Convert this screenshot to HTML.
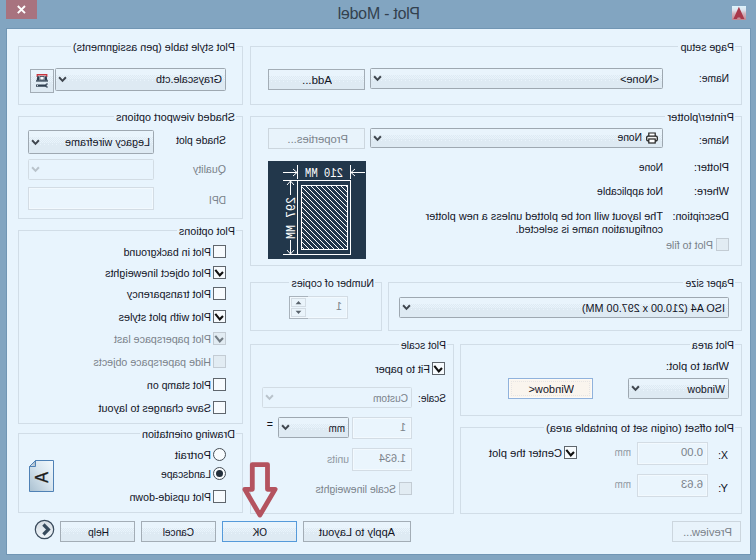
<!DOCTYPE html>
<html lang="en"><head><meta charset="utf-8"><title>Plot - Model</title>
<style>
html,body{margin:0;padding:0;background:#82a5c1;}
body{width:756px;height:560px;overflow:hidden;position:relative;font-family:"Liberation Sans",sans-serif;}
#dlg{position:absolute;left:0;top:0;width:756px;height:560px;transform:scaleX(-1);transform-origin:50% 50%;background:#82a5c1;overflow:hidden;}
#client{position:absolute;right:7px;top:29px;width:743px;height:525px;background:#e8f4fd;box-shadow:0 0 0 1px #7196b4;}
#dlg div,#dlg span,#dlg svg.abs{position:absolute;box-sizing:border-box;}
.t{color:#11131f;white-space:nowrap;font-size:11.5px;line-height:14px;transform-origin:0 0;}
.g{color:#7a828a;}
.g2{color:#8f979f;}
.grp{border:1px solid #d1dde7;}
.mask{background:#e8f4fd;}
.cb{border-radius:1.5px;border:1px solid #9ea8b1;background:linear-gradient(#e9f4fc,#e9f4fc) 0 0/100% 6px no-repeat,repeating-conic-gradient(#e9f4fc 0 25%,#deeaf3 0 50%) 0 6px/2px 2px repeat-x,repeating-conic-gradient(#e9f4fc 0 25%,#deeaf3 0 50%) 0 8px/2px 2px repeat-x,linear-gradient(90deg,#e9f4fc 1px,rgba(233,244,252,0) 1px) 0 11px/4px 1px repeat-x,#deeaf3;}
.cb.dis{border-color:#d2dce4;background:#e8f4fd;}
.cb .arw{position:absolute;right:2px;top:50%;margin-top:-3.500px;}
.cb .prn{position:absolute;left:4px;top:3px;}
.btn{border:1px solid #a3adb6;background:linear-gradient(#e9f4fc,#e9f4fc) 0 0/100% 6px no-repeat,repeating-conic-gradient(#e9f4fc 0 25%,#deeaf3 0 50%) 0 6px/2px 2px repeat-x,repeating-conic-gradient(#e9f4fc 0 25%,#deeaf3 0 50%) 0 8px/2px 2px repeat-x,linear-gradient(90deg,#e9f4fc 1px,rgba(233,244,252,0) 1px) 0 11px/4px 1px repeat-x,#deeaf3;}
.tall{background:linear-gradient(#e9f4fc,#e9f4fc) 0 0/100% 6px no-repeat,repeating-conic-gradient(#e9f4fc 0 25%,#deeaf3 0 50%) 0 6px/2px 2px repeat-x,repeating-conic-gradient(#e9f4fc 0 25%,#deeaf3 0 50%) 0 8px/2px 2px repeat-x,repeating-conic-gradient(#e9f4fc 0 25%,#deeaf3 0 50%) 0 10px/2px 2px repeat-x,linear-gradient(90deg,#e9f4fc 1px,rgba(233,244,252,0) 1px) 0 13px/4px 1px repeat-x,#deeaf3;}
.btn.dis{border-color:#ccd6de;background:#e8f3fb;}
.btn.def{border-color:#559ada;}
.btn.hot{border-color:#90b2dc;background:#faf5ee;box-shadow:inset 0 0 0 1px #fdfaf6;}
.btn.hot:after{content:"";position:absolute;left:2px;top:2px;right:2px;bottom:2px;border:1px dotted rgba(110,125,165,0.13);}
.tb{border:1px solid #d3dce4;background:#eaf5fd;box-shadow:inset 0 0 0 1px #f2f9fe;}
.ck{border:1px solid #5f666d;background:#f7fbfe;}
.ck.dis{border-color:#c3ccd4;background:#e2ecf3;}
.ck svg{position:absolute;left:0;top:0;}
.rd{border:1px solid #454d55;border-radius:50%;background:#f9fcfe;}
.rd i{position:absolute;left:2px;top:2px;width:7px;height:7px;border-radius:50%;background:#232f3b;}
.spn{border:1px solid #a9b3bc;border-left:0;}
.spb{border:1px solid #d3dce4;background:#eaf4fb;}
.spb svg{position:absolute;left:0;top:0;}
#title{left:-1px;width:756px;top:4px;text-align:center;font-size:16px;line-height:19px;color:#33414e;letter-spacing:-0.27px;}
#close{right:6px;top:0;width:31px;height:19px;background:#a8737f;}
</style></head>
<body>
<div id="dlg">
<div id="title"><span id="ttl" style="position:static">Plot - Model</span></div>
<div id="close"><svg width="32" height="20" viewBox="0 0 32 20" style="position:absolute;left:0;top:0"><path d="M12 6 L19.200 13.200 M19.200 6 L12 13.200" stroke="#fff" stroke-width="1.9" fill="none"/></svg></div>
<svg class="abs" style="right:732px;top:6px" width="14" height="14" viewBox="0 0 14 14"><defs><linearGradient id="ig" x1="0" y1="0" x2="0" y2="1"><stop offset="0" stop-color="#dcf3fc"/><stop offset="0.3" stop-color="#dde4ee"/><stop offset="0.55" stop-color="#d3b3bc"/><stop offset="1" stop-color="#bf8590"/></linearGradient></defs><rect width="14" height="14" fill="url(#ig)"/><path d="M7.100 0.800 L12.600 13 H9 L8.300 11.400 H5.900 L5.200 13 H1.600 Z" fill="#a8384a"/></svg>
<div id="client"></div>
<div class="grp" style="right:18px;top:46px;width:225px;height:59px;"></div>
<div class="mask" style="right:70.6px;top:44px;width:165.5px;height:6px"></div>
<span id="t1" class="t" style="left:521.4px;top:40.40px;transform:scaleX(0.939);">Plot style table (pen assignments)</span>
<div class="cb" style="right:55px;top:68px;width:171px;height:23px;"><svg class="arw" width="9" height="7" viewBox="0 0 9 7"><path d="M1.100 1.300 L4.500 4.900 L7.900 1.300" fill="none" stroke="#40474f" stroke-width="2"/></svg></div>
<span id="t2" class="t" style="left:533.6px;top:71.50px;transform:scaleX(0.939);">Grayscale.ctb</span>
<div class="btn ico tall" style="right:30px;top:69px;width:24px;height:24px;"><svg width="24" height="24" viewBox="0 0 24 24" style="position:absolute;left:-1px;top:-1px">
<path d="M6.600 8 V5 H17.400 V8 H16.200 V6.400 H7.800 V8 Z" fill="#c9353d"/>
<path d="M7.300 7.200 H9 L9.300 11.500 H6.600 Z M15 7.200 H16.700 L17.400 11.500 H14.700 Z" fill="#2f3f50"/>
<rect x="9.900" y="7.400" width="4.200" height="3.600" fill="#fbfdff" stroke="#2f3f50" stroke-width="0.8"/>
<rect x="6" y="11.300" width="12" height="1.300" fill="#2f3f50"/>
<path d="M18 15.500 V17.700 H8.600 L7.800 18.600 H6.100 V17.600 H7.300 V15.600 H6.100 V14.600 H7.800 L8.600 15.500 Z" fill="#2f3f50"/>
<circle cx="16.600" cy="16.600" r="0.600" fill="#eaf3fa"/>
</svg></div>
<div class="grp" style="right:18px;top:116px;width:225px;height:103px;"></div>
<div class="mask" style="right:113.6px;top:114px;width:122.5px;height:6px"></div>
<span id="t3" class="t" style="left:521.4px;top:110.40px;transform:scaleX(0.945);">Shaded viewport options</span>
<span id="t4" class="t" style="left:530px;top:132.70px;transform:scaleX(0.909);">Shade plot</span>
<div class="cb tall" style="right:28px;top:130px;width:126px;height:24px;"><svg class="arw" width="9" height="7" viewBox="0 0 9 7"><path d="M1.100 1.300 L4.500 4.900 L7.900 1.300" fill="none" stroke="#40474f" stroke-width="2"/></svg></div>
<span id="t5" class="t" style="left:606px;top:134.50px;transform:scaleX(0.936);">Legacy wireframe</span>
<span id="t6" class="t g" style="left:530px;top:161.90px;transform:scaleX(0.922);">Quality</span>
<div class="cb dis" style="right:28px;top:159px;width:126px;height:21px;"><svg class="arw" width="9" height="7" viewBox="0 0 9 7"><path d="M1.100 1.300 L4.500 4.900 L7.900 1.300" fill="none" stroke="#b9c3cb" stroke-width="2"/></svg></div>
<span id="t7" class="t g" style="left:530px;top:192.90px;transform:scaleX(0.887);">DPI</span>
<div class="tb" style="right:28px;top:187px;width:126px;height:23px;"></div>
<div class="grp" style="right:18px;top:230px;width:225px;height:194px;"></div>
<div class="mask" style="right:176.6px;top:228px;width:59.5px;height:6px"></div>
<span id="t8" class="t" style="left:521.4px;top:224.40px;transform:scaleX(0.932);">Plot options</span>
<div class="ck" style="right:213px;top:245px;width:13px;height:13px;"></div>
<span id="t9" class="t" style="left:545.3px;top:245.20px;transform:scaleX(0.918);">Plot in background</span>
<div class="ck" style="right:213px;top:266px;width:13px;height:13px;"><svg width="11" height="11" viewBox="0 0 11 11"><path d="M2 5 L5.200 8.300 L9.700 2.800" fill="none" stroke="#111" stroke-width="2.1" stroke-linejoin="miter"/></svg></div>
<span id="t10" class="t" style="left:545.3px;top:266.20px;transform:scaleX(0.931);">Plot object lineweights</span>
<div class="ck" style="right:213px;top:287px;width:13px;height:13px;"></div>
<span id="t11" class="t" style="left:545.3px;top:287.20px;transform:scaleX(0.939);">Plot transparency</span>
<div class="ck" style="right:213px;top:310px;width:13px;height:13px;"><svg width="11" height="11" viewBox="0 0 11 11"><path d="M2 5 L5.200 8.300 L9.700 2.800" fill="none" stroke="#111" stroke-width="2.1" stroke-linejoin="miter"/></svg></div>
<span id="t12" class="t" style="left:545.3px;top:310.20px;transform:scaleX(0.946);">Plot with plot styles</span>
<div class="ck dis" style="right:213px;top:332px;width:13px;height:13px;"><svg width="11" height="11" viewBox="0 0 11 11"><path d="M2 5 L5.200 8.300 L9.700 2.800" fill="none" stroke="#727c84" stroke-width="2.1" stroke-linejoin="miter"/></svg></div>
<span id="t13" class="t g" style="left:545.3px;top:332.20px;transform:scaleX(0.931);">Plot paperspace last</span>
<div class="ck dis" style="right:213px;top:355px;width:13px;height:13px;"></div>
<span id="t14" class="t g" style="left:545.3px;top:355.20px;transform:scaleX(0.928);">Hide paperspace objects</span>
<div class="ck" style="right:213px;top:378px;width:13px;height:13px;"></div>
<span id="t15" class="t" style="left:545.3px;top:378.20px;transform:scaleX(0.910);">Plot stamp on</span>
<div class="ck" style="right:213px;top:401px;width:13px;height:13px;"></div>
<span id="t16" class="t" style="left:545.3px;top:401.20px;transform:scaleX(0.941);">Save changes to layout</span>
<div class="grp" style="right:18px;top:433px;width:225px;height:80px;"></div>
<div class="mask" style="right:139.6px;top:431px;width:96.5px;height:6px"></div>
<span id="t17" class="t" style="left:521.4px;top:427.40px;transform:scaleX(0.939);">Drawing orientation</span>
<div class="rd" style="right:213px;top:448px;width:13px;height:13px;"></div>
<span id="t18" class="t" style="left:545.1px;top:448.20px;transform:scaleX(0.971);">Portrait</span>
<div class="rd" style="right:213px;top:467px;width:13px;height:13px;"><i></i></div>
<span id="t19" class="t" style="left:545.1px;top:467.40px;transform:scaleX(0.888);">Landscape</span>
<div class="ck" style="right:213px;top:490px;width:13px;height:13px;"></div>
<span id="t20" class="t" style="left:545.1px;top:490.20px;transform:scaleX(0.924);">Plot upside-down</span>
<div class="pico" style="right:29px;top:460px;width:25px;height:32px;"><svg width="25" height="32" viewBox="0 0 25 32">
<defs><linearGradient id="pg" x1="0" y1="0" x2="1" y2="1"><stop offset="0" stop-color="#f3f9fd"/><stop offset="0.45" stop-color="#d9e6ef"/><stop offset="1" stop-color="#a9c0d0"/></linearGradient>
<linearGradient id="pf" x1="0" y1="0" x2="1" y2="1"><stop offset="0" stop-color="#93a9bb"/><stop offset="1" stop-color="#dfe9f1"/></linearGradient></defs>
<path d="M0.5 0.5 H18.5 L24.5 6.5 V31.5 H0.5 Z" fill="url(#pg)" stroke="#4f81b5" stroke-width="1"/>
<path d="M18.5 0.5 V6.5 H24.5 Z" fill="url(#pf)" stroke="#4f81b5" stroke-width="1" stroke-linejoin="round"/>
<text x="0" y="0" transform="translate(5.9,17.4) rotate(90) scale(0.9,1)" text-anchor="middle" font-family="Liberation Sans, sans-serif" font-size="18" fill="#1c1c1c" stroke="#1c1c1c" stroke-width="0.3">A</text>
</svg></div>
<div class="grp" style="right:250px;top:46px;width:492px;height:59px;"></div>
<div class="mask" style="right:678.1px;top:44px;width:57.0px;height:6px"></div>
<span id="t21" class="t" style="left:22.4px;top:40.40px;transform:scaleX(0.919);">Page setup</span>
<span id="t22" class="t" style="left:27px;top:70.90px;transform:scaleX(0.886);">Name:</span>
<div class="cb" style="right:370px;top:68px;width:293px;height:21px;"><svg class="arw" width="9" height="7" viewBox="0 0 9 7"><path d="M1.100 1.300 L4.500 4.900 L7.900 1.300" fill="none" stroke="#40474f" stroke-width="2"/></svg></div>
<span id="t23" class="t" style="left:96.6px;top:71.50px;transform:scaleX(0.953);">&lt;None&gt;</span>
<div class="btn" style="right:268px;top:69px;width:97px;height:21px;"></div>
<span id="t24" class="t" style="left:423.6px;top:73.20px;transform:scaleX(0.998);">Add...</span>
<div class="grp" style="right:250px;top:116px;width:492px;height:150px;"></div>
<div class="mask" style="right:665.1px;top:114px;width:70.0px;height:6px"></div>
<span id="t25" class="t" style="left:22.4px;top:110.40px;transform:scaleX(0.963);">Printer/plotter</span>
<span id="t26" class="t" style="left:27px;top:133.40px;transform:scaleX(0.886);">Name:</span>
<div class="cb" style="right:370px;top:128px;width:293px;height:20px;"><svg class="arw" width="9" height="7" viewBox="0 0 9 7"><path d="M1.100 1.300 L4.500 4.900 L7.900 1.300" fill="none" stroke="#40474f" stroke-width="2"/></svg><svg class="prn" width="12" height="12" viewBox="0 0 12 12">
<path d="M2.800 4.500 V1 H9.200 V4.500" fill="#fff" stroke="#222" stroke-width="1.2"/>
<rect x="0.700" y="4.200" width="10.600" height="4.600" rx="1.2" fill="#f4f4f4" stroke="#222" stroke-width="1.3"/>
<rect x="2.800" y="7" width="6.400" height="4" fill="#fff" stroke="#222" stroke-width="1.2"/>
</svg></div>
<span id="t27" class="t" style="left:114.2px;top:130.40px;transform:scaleX(0.891);">None</span>
<div class="btn dis" style="right:268px;top:128px;width:97px;height:21px;"></div>
<span id="t28" class="t g" style="left:408.45px;top:132.20px;transform:scaleX(0.976);">Properties...</span>
<span id="t29" class="t" style="left:26.5px;top:160.40px;transform:scaleX(0.961);">Plotter:</span>
<span id="t30" class="t" style="left:93px;top:160.40px;transform:scaleX(0.873);">None</span>
<span id="t31" class="t" style="left:26.5px;top:184.40px;transform:scaleX(0.944);">Where:</span>
<span id="t32" class="t" style="left:93px;top:184.40px;transform:scaleX(0.905);">Not applicable</span>
<span id="t33" class="t" style="left:26.5px;top:209.10px;transform:scaleX(0.931);">Description:</span>
<span id="t34" class="t" style="left:93px;top:209.10px;transform:scaleX(0.945);">The layout will not be plotted unless a new plotter</span>
<span id="t35" class="t" style="left:93px;top:221.70px;transform:scaleX(0.930);">configuration name is selected.</span>
<div class="ck dis" style="right:716px;top:238px;width:13px;height:13px;"></div>
<span id="t36" class="t g" style="left:43px;top:238.40px;transform:scaleX(0.931);">Plot to file</span>
<div class="pv" style="right:268px;top:161px;width:98px;height:98px;"><svg width="98" height="98" viewBox="0 0 98 98">
<defs><pattern id="hp" width="5" height="5" patternUnits="userSpaceOnUse" shape-rendering="crispEdges"><path d="M4 0h1v1h-1zM3 1h1v1h-1zM2 2h1v1h-1zM1 3h1v1h-1zM0 4h1v1h-1z" fill="#fff"/></pattern></defs>
<rect width="98" height="98" fill="#22374b"/>
<rect x="15.5" y="19.5" width="53" height="74" fill="none" stroke="#fff" stroke-width="1"/>
<rect x="18" y="24" width="47" height="65" fill="url(#hp)"/>
<rect x="18.5" y="24.5" width="46" height="64" fill="none" stroke="#fff" stroke-width="1"/>
<g stroke="#fff" stroke-width="1" fill="none">
<path d="M15.5 4 V18"/><path d="M68.5 4 V18"/>
<path d="M1 11.5 H15"/><path d="M11 8 L15 11.5 L11 15"/>
<path d="M83 11.5 H69"/><path d="M73 8 L69 11.5 L73 15"/>
<path d="M69 19.5 H83"/><path d="M69 93.500 H83"/>
<path d="M75.500 20 V34"/><path d="M72 24 L75.500 20 L79 24"/>
<path d="M75.500 93 V79"/><path d="M72 89 L75.500 93 L79 89"/>
</g>
<text x="42" y="15.8" text-anchor="middle" font-family="Liberation Mono, monospace" font-size="12" fill="#fff" textLength="38" lengthAdjust="spacingAndGlyphs">210 MM</text>
<text transform="translate(71.5,57) rotate(90)" text-anchor="middle" font-family="Liberation Mono, monospace" font-size="12" fill="#fff" textLength="42" lengthAdjust="spacingAndGlyphs">297 MM</text>
</svg></div>
<div class="grp" style="right:250px;top:282px;width:132px;height:49px;"></div>
<div class="mask" style="right:289.1px;top:280px;width:86.0px;height:6px"></div>
<span id="t37" class="t" style="left:382.4px;top:276.40px;transform:scaleX(0.915);">Number of copies</span>
<div class="tb" style="right:289px;top:296px;width:59px;height:23px;"></div>
<div class="spn" style="right:289px;top:296px;width:19px;height:23px;"></div>
<div class="spb" style="right:291px;top:298px;width:15px;height:9px;"><svg width="13" height="7" viewBox="0 0 13 7"><path d="M3.600 5.200 L6.500 2 L9.400 5.200 Z" fill="#59636c"/></svg></div>
<div class="spb" style="right:291px;top:308px;width:15px;height:9px;"><svg width="13" height="7" viewBox="0 0 13 7"><path d="M3.600 1.800 L6.500 5 L9.400 1.800 Z" fill="#59636c"/></svg></div>
<span id="t38" class="t g" style="left:413.7px;top:298.90px;transform:scaleX(0.930);">1</span>
<div class="grp" style="right:388px;top:282px;width:354px;height:49px;"></div>
<div class="mask" style="right:683.1px;top:280px;width:52.0px;height:6px"></div>
<span id="t39" class="t" style="left:22.4px;top:276.40px;transform:scaleX(0.892);">Paper size</span>
<div class="cb" style="right:399px;top:297px;width:330px;height:21px;"><svg class="arw" width="9" height="7" viewBox="0 0 9 7"><path d="M1.100 1.300 L4.500 4.900 L7.900 1.300" fill="none" stroke="#40474f" stroke-width="2"/></svg></div>
<span id="t40" class="t" style="left:30.6px;top:300.50px;transform:scaleX(0.940);">ISO A4 (210.00 x 297.00 MM)</span>
<div class="grp" style="right:250px;top:344px;width:204px;height:170px;"></div>
<div class="mask" style="right:398.6px;top:342px;width:48.5px;height:6px"></div>
<span id="t41" class="t" style="left:310.4px;top:338.40px;transform:scaleX(0.903);">Plot scale</span>
<div class="ck" style="right:432px;top:362px;width:13px;height:13px;"><svg width="11" height="11" viewBox="0 0 11 11"><path d="M2 5 L5.200 8.300 L9.700 2.800" fill="none" stroke="#111" stroke-width="2.1" stroke-linejoin="miter"/></svg></div>
<span id="t42" class="t" style="left:326px;top:362.20px;transform:scaleX(0.945);">Fit to paper</span>
<span id="t43" class="t" style="left:309.8px;top:390.70px;transform:scaleX(0.876);">Scale:</span>
<div class="cb dis" style="right:262px;top:387px;width:150px;height:21px;"><svg class="arw" width="9" height="7" viewBox="0 0 9 7"><path d="M1.100 1.300 L4.500 4.900 L7.900 1.300" fill="none" stroke="#b9c3cb" stroke-width="2"/></svg></div>
<span id="t44" class="t g" style="left:347.6px;top:390.50px;transform:scaleX(0.883);">Custom</span>
<div class="tb" style="right:352px;top:417px;width:60px;height:22px;"></div>
<span id="t45" class="t g" style="left:350.2px;top:420.30px;transform:scaleX(0.930);">1</span>
<div class="cb" style="right:278px;top:417px;width:71px;height:21px;"><svg class="arw" width="9" height="7" viewBox="0 0 9 7"><path d="M1.100 1.300 L4.500 4.900 L7.900 1.300" fill="none" stroke="#40474f" stroke-width="2"/></svg></div>
<span id="t46" class="t" style="left:410.6px;top:420.50px;transform:scaleX(0.850);">mm</span>
<span id="t47" class="t" style="left:482.7px;top:416.90px;transform:scaleX(0.930);">=</span>
<div class="tb" style="right:352px;top:448px;width:60px;height:23px;"></div>
<span id="t48" class="t g" style="left:350.2px;top:451.30px;transform:scaleX(0.938);">1.634</span>
<span id="t49" class="t g g2" style="left:407px;top:452.40px;transform:scaleX(0.905);">units</span>
<div class="ck dis" style="right:399px;top:482px;width:13px;height:13px;"></div>
<span id="t50" class="t g" style="left:359.7px;top:482.20px;transform:scaleX(0.906);">Scale lineweights</span>
<div class="grp" style="right:460px;top:344px;width:282px;height:72px;"></div>
<div class="mask" style="right:689.6px;top:342px;width:45.5px;height:6px"></div>
<span id="t51" class="t" style="left:22.4px;top:338.40px;transform:scaleX(0.912);">Plot area</span>
<span id="t52" class="t" style="left:27px;top:358.90px;transform:scaleX(0.976);">What to plot:</span>
<div class="cb" style="right:628px;top:378px;width:101px;height:21px;"><svg class="arw" width="9" height="7" viewBox="0 0 9 7"><path d="M1.100 1.300 L4.500 4.900 L7.900 1.300" fill="none" stroke="#40474f" stroke-width="2"/></svg></div>
<span id="t53" class="t" style="left:30.6px;top:381.50px;transform:scaleX(0.917);">Window</span>
<div class="btn hot" style="right:508px;top:378px;width:85px;height:21px;"></div>
<span id="t54" class="t" style="left:181.55px;top:382.20px;transform:scaleX(0.955);">Window&lt;</span>
<div class="grp" style="right:460px;top:427px;width:282px;height:87px;"></div>
<div class="mask" style="right:543.6px;top:425px;width:191.5px;height:6px"></div>
<span id="t55" class="t" style="left:22.4px;top:421.40px;transform:scaleX(0.965);">Plot offset (origin set to printable area)</span>
<span id="t56" class="t" style="left:28.2px;top:447.50px;transform:scaleX(0.920);">X:</span>
<span id="t57" class="t" style="left:28.2px;top:480.70px;transform:scaleX(0.977);">Y:</span>
<div class="tb" style="right:637px;top:442px;width:71px;height:23px;"></div>
<span id="t58" class="t g" style="left:53.2px;top:445.20px;transform:scaleX(0.983);">0.00</span>
<div class="tb" style="right:637px;top:474px;width:71px;height:23px;"></div>
<span id="t59" class="t g" style="left:53.2px;top:477.40px;transform:scaleX(0.983);">6.63</span>
<span id="t60" class="t g g2" style="left:124.5px;top:445.20px;transform:scaleX(0.850);">mm</span>
<span id="t61" class="t g g2" style="left:124.5px;top:477.40px;transform:scaleX(0.850);">mm</span>
<div class="ck" style="right:564px;top:446px;width:13px;height:13px;"><svg width="11" height="11" viewBox="0 0 11 11"><path d="M2 5 L5.200 8.300 L9.700 2.800" fill="none" stroke="#111" stroke-width="2.1" stroke-linejoin="miter"/></svg></div>
<span id="t62" class="t" style="left:194px;top:445.90px;transform:scaleX(0.968);">Center the plot</span>
<div class="btn dis" style="right:672px;top:521px;width:69px;height:21px;"></div>
<span id="t63" class="t g" style="left:23.5px;top:525.20px;transform:scaleX(0.983);">Preview...</span>
<div class="btn" style="right:303px;top:521px;width:108px;height:21px;"></div>
<span id="t64" class="t" style="left:361px;top:525.20px;transform:scaleX(0.959);">Apply to Layout</span>
<div class="btn def" style="right:222px;top:521px;width:75px;height:21px;"></div>
<span id="t65" class="t" style="left:489.25px;top:525.20px;transform:scaleX(0.872);">OK</span>
<div class="btn" style="right:141px;top:521px;width:75px;height:21px;"></div>
<span id="t66" class="t" style="left:561.85px;top:525.20px;transform:scaleX(0.874);">Cancel</span>
<div class="btn" style="right:60px;top:521px;width:75px;height:21px;"></div>
<span id="t67" class="t" style="left:647.3px;top:525.20px;transform:scaleX(0.888);">Help</span>
<svg class="abs" style="right:34px;top:519px" width="21" height="21" viewBox="0 0 21 21"><defs><linearGradient id="cg" x1="0" y1="0" x2="0" y2="1"><stop offset="0" stop-color="#d6dde3"/><stop offset="1" stop-color="#eef4f9"/></linearGradient></defs><circle cx="10.5" cy="10.5" r="9.200" fill="url(#cg)" stroke="#3a4b5c" stroke-width="1.2"/><path d="M11.600 5.500 L6.600 10.500 L11.600 15.500" fill="none" stroke="#364a5c" stroke-width="3.2"/></svg>
<svg class="abs" style="right:238px;top:459px" width="44" height="62" viewBox="0 0 44 62"><path d="M14.500 5.600 H29.700 V30.300 H37.200 L22.100 56.100 L6.900 30.300 H14.500 Z" fill="none" stroke="#b4535f" stroke-width="4.8" stroke-linejoin="round"/></svg>
</div>
</body></html>
